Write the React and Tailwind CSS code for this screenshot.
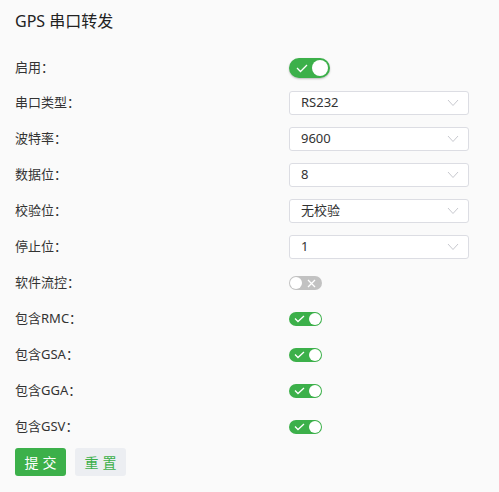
import { useState } from 'react';

const font = { fontFamily: '"Noto Sans", "Noto Sans CJK SC", sans-serif' };

function Toggle({ on, big, onClick }) {
  if (big) {
    return (
      <button
        onClick={onClick}
        className={`relative w-[41px] h-[20px] rounded-full shadow-[0_1px_2px_rgba(0,0,0,0.25)] ${on ? 'bg-[#3cb04a]' : 'bg-[#c4c4c4]'}`}
      >
        <svg className="absolute left-[7px] top-[6px]" width="12" height="9" viewBox="0 0 12 9" fill="none">
          <path d="M1 4 L4.5 7.5 L11 1" stroke="#fff" strokeWidth="1.3" />
        </svg>
        <span className="absolute right-[2px] top-[2px] w-[16px] h-[16px] rounded-full bg-white" />
      </button>
    );
  }
  return (
    <button
      onClick={onClick}
      className={`relative w-[33px] h-[14px] rounded-full ${on ? 'bg-[#3cb04a]' : 'bg-[#c2c2c2]'}`}
    >
      {on ? (
        <>
          <svg className="absolute left-[5px] top-[3px]" width="11" height="8" viewBox="0 0 11 8" fill="none">
            <path d="M1 3.5 L4 6.5 L10 1" stroke="#fff" strokeWidth="1.3" />
          </svg>
          <span className="absolute right-[1px] top-[1px] w-[12px] h-[12px] rounded-full bg-white" />
        </>
      ) : (
        <>
          <span className="absolute left-[1px] top-[1px] w-[12px] h-[12px] rounded-full bg-white" />
          <svg className="absolute right-[6px] top-[2.5px]" width="9" height="9" viewBox="0 0 9 9" fill="none">
            <path d="M1 1 L8 8 M8 1 L1 8" stroke="#fff" strokeWidth="1.3" />
          </svg>
        </>
      )}
    </button>
  );
}

function Select({ value }) {
  return (
    <div className="flex items-center justify-between w-[180px] h-[24px] bg-white border border-[#dcdde3] rounded-[3px] pl-[11px] pr-[9px]">
      <span className="text-[13px] text-[#333]">{value}</span>
      <svg width="12" height="8" viewBox="0 0 12 8" fill="none">
        <path d="M1 1 L6 6.5 L11 1" stroke="#c8c9cf" strokeWidth="1" />
      </svg>
    </div>
  );
}

function Row({ label, children, first }) {
  return (
    <div className={`flex items-center ${first ? 'h-[34px]' : 'h-[36px]'}`}>
      <div className="w-[274px] text-[13px] text-[#333]">{label}</div>
      {children}
    </div>
  );
}

export default function App() {
  const [flags, setFlags] = useState({ enable: true, flow: false, rmc: true, gsa: true, gga: true, gsv: true });
  const flip = (k) => setFlags((f) => ({ ...f, [k]: !f[k] }));

  return (
    <div className="w-[499px] h-[492px] bg-[#fafafa] pl-[15px]" style={font}>
      <div className="h-[51px] pt-[9px]">
        <h1 className="text-[16px] font-normal text-[#222]">GPS 串口转发</h1>
      </div>
      <Row label="启用：" first>
        <Toggle big on={flags.enable} onClick={() => flip('enable')} />
      </Row>
      <Row label="串口类型："><Select value="RS232" /></Row>
      <Row label="波特率："><Select value="9600" /></Row>
      <Row label="数据位："><Select value="8" /></Row>
      <Row label="校验位："><Select value="无校验" /></Row>
      <Row label="停止位："><Select value="1" /></Row>
      <Row label="软件流控："><Toggle on={flags.flow} onClick={() => flip('flow')} /></Row>
      <Row label="包含RMC："><Toggle on={flags.rmc} onClick={() => flip('rmc')} /></Row>
      <Row label="包含GSA："><Toggle on={flags.gsa} onClick={() => flip('gsa')} /></Row>
      <Row label="包含GGA："><Toggle on={flags.gga} onClick={() => flip('gga')} /></Row>
      <Row label="包含GSV："><Toggle on={flags.gsv} onClick={() => flip('gsv')} /></Row>
      <div className="flex gap-[9px] mt-[3px]">
        <button className="w-[51px] h-[28px] rounded-[3px] bg-[#3cb04a] text-white text-[14px] tracking-[4px] pl-[4px]">提交</button>
        <button className="w-[51px] h-[28px] rounded-[3px] bg-[#eceef2] text-[#3cb04a] text-[14px] tracking-[4px] pl-[4px]">重置</button>
      </div>
    </div>
  );
}
